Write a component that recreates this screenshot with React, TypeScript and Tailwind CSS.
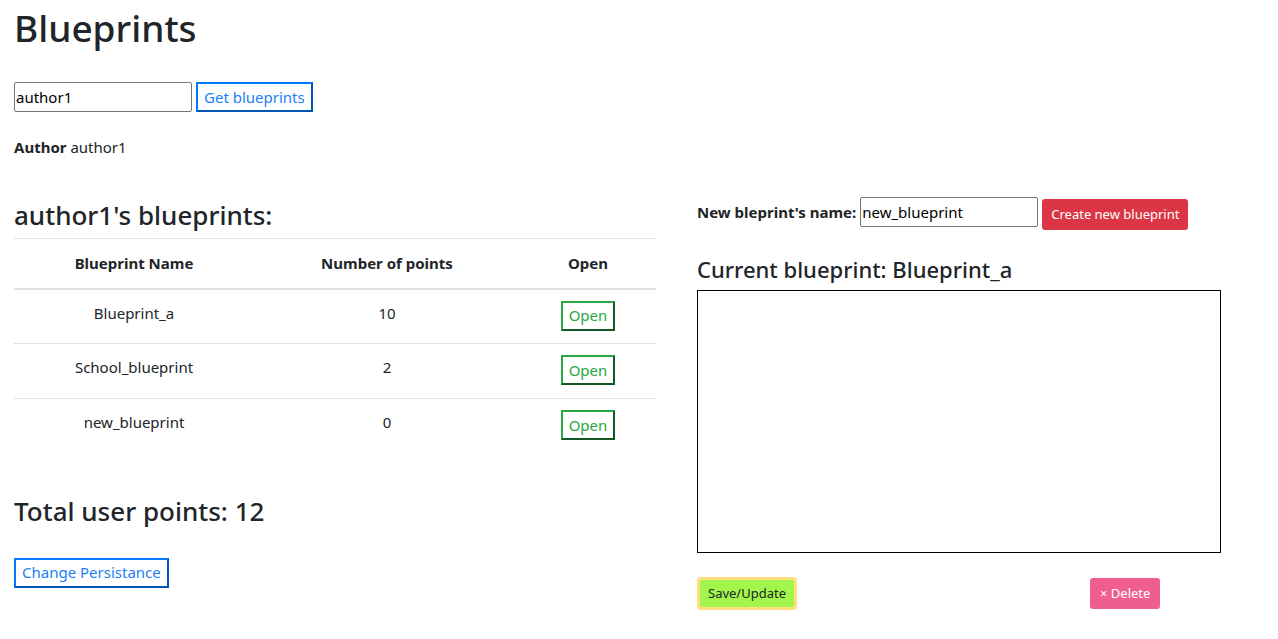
import { useState } from "react";

const blueprints = [
  { name: "Blueprint_a", points: 10 },
  { name: "School_blueprint", points: 2 },
  { name: "new_blueprint", points: 0 },
];

function OpenButton() {
  return (
    <button className="px-[6px] h-[30px] text-[15px] leading-none text-[#28a745] bg-white border-2 border-t-[#28a745] border-l-[#28a745] border-b-[#155724] border-r-[#155724]">
      Open
    </button>
  );
}

export default function App() {
  const [author, setAuthor] = useState("author1");
  const [newName, setNewName] = useState("new_blueprint");

  return (
    <div className="min-h-[639px] bg-white text-[#212529] px-[14px] font-['Noto_Sans',sans-serif]">
      <h1 className="text-[37px] leading-[48px] font-medium pt-[4px]">Blueprints</h1>

      {/* author search */}
      <div className="flex items-center gap-[4px] mt-[30px]">
        <input
          value={author}
          onChange={(e) => setAuthor(e.target.value)}
          className="w-[178px] h-[30px] border border-[#767676] rounded-[2px] px-[1px] text-[15px] text-black outline-none"
        />
        <button className="h-[30px] px-[6px] text-[15px] text-[#1a7ff5] bg-white border-2 border-t-[#007bff] border-l-[#007bff] border-b-[#0056b3] border-r-[#0056b3]">
          Get blueprints
        </button>
      </div>

      <p className="mt-[23px] text-[15px] leading-[24px]">
        <b>Author</b> author1
      </p>

      <div className="flex mt-[39px]">
        {/* left column */}
        <div className="w-[642px] shrink-0">
          <h2 className="text-[26px] leading-[34px] font-medium">author1's blueprints:</h2>
          <table className="w-full mt-[6px] text-[15px] text-center">
            <thead>
              <tr className="border-t border-[#dee2e6]">
                <th className="w-[240px] h-[50px] font-bold border-b-2 border-[#dee2e6]">Blueprint Name</th>
                <th className="h-[50px] font-bold border-b-2 border-[#dee2e6]">Number of points</th>
                <th className="w-[136px] h-[50px] font-bold border-b-2 border-[#dee2e6]">Open</th>
              </tr>
            </thead>
            <tbody>
              {blueprints.map((bp, i) => (
                <tr key={bp.name} className={i < blueprints.length - 1 ? "border-b border-[#dee2e6]" : ""}>
                  <td className="h-[55px] align-top pt-[12px]">{bp.name}</td>
                  <td className="h-[55px] align-top pt-[12px]">{bp.points}</td>
                  <td className="h-[55px] align-top pt-[11px]">
                    <OpenButton />
                  </td>
                </tr>
              ))}
            </tbody>
          </table>

          <h2 className="text-[26px] leading-[34px] font-medium mt-[40px]">Total user points: 12</h2>
          <button className="mt-[30px] h-[30px] px-[6px] text-[15px] text-[#1a7ff5] bg-white border-2 border-t-[#007bff] border-l-[#007bff] border-b-[#0056b3] border-r-[#0056b3]">
            Change Persistance
          </button>
        </div>

        {/* right column */}
        <div className="ml-[41px] w-[524px] shrink-0">
          <div className="flex items-start mt-[-1px]">
            <label className="text-[15px] font-bold mr-[4px] pt-[4px]">New bleprint's name:</label>
            <input
              value={newName}
              onChange={(e) => setNewName(e.target.value)}
              className="w-[178px] h-[30px] border border-[#767676] rounded-[2px] px-[1px] text-[15px] text-black outline-none"
            />
            <button className="ml-[4px] mt-[2px] h-[31px] px-[9px] rounded-[3px] bg-[#dc3545] text-white text-[13px]">
              Create new blueprint
            </button>
          </div>

          <h3 className="text-[22px] leading-[29px] font-medium mt-[25px]">Current blueprint: Blueprint_a</h3>
          <div className="mt-[6px] w-[524px] h-[263px] border border-black" />

          <div className="flex items-center mt-[24px]">
            <button className="h-[33px] px-[8px] rounded-[4px] bg-[#a2f54a] text-[#212529] text-[13px] border-[3px] border-[#ffdf80]">
              Save/Update
            </button>
            <button className="ml-[293px] h-[31px] px-[10px] rounded-[3px] bg-[#f05e91] text-white text-[13px]">
              × Delete
            </button>
          </div>
        </div>
      </div>
    </div>
  );
}
